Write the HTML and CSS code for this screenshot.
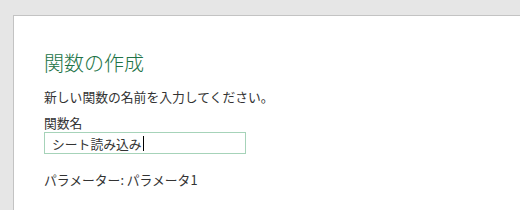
FILE: index.html
```html
<!DOCTYPE html>
<html lang="ja">
<head>
    <meta charset="UTF-8">
    <title>関数の作成</title>
    <link rel="stylesheet" href="styles.css">
</head>
<body>
<div class="dialog">
    <h1 class="title">関数の作成</h1>
    <p class="desc">新しい関数の名前を入力してください。</p>
    <label class="label" for="fn">関数名</label>
    <div class="input"><span id="fn">シート読み込み</span><span class="caret"></span></div>
    <p class="params">パラメーター: パラメータ1</p>
</div>
</body>
</html>
```
FILE: styles.css
```css
* {
    padding: 0;
    margin: 0;
    box-sizing: border-box;
}

body {
    background: #e6e6e6;
    width: 520px;
    height: 210px;
    overflow: hidden;
    padding: 15px 0 0 13px;
    font-family: "Noto Sans CJK JP", "Noto Sans", sans-serif;
    color: #333;
}

.dialog {
    background: #fff;
    border-top: 1px solid #c3c3c3;
    border-left: 1px solid #c3c3c3;
    height: 200px;
    padding: 33px 0 0 30px;
}

.title {
    font-size: 20px;
    font-weight: 300;
    color: #217346;
    line-height: 28px;
}

.desc {
    margin-top: 11px;
    font-size: 12.8px;
    line-height: 18px;
}

.label {
    display: block;
    margin-top: 8px;
    font-size: 12.8px;
    line-height: 18px;
}

.input {
    display: flex;
    align-items: center;
    width: 202px;
    height: 22px;
    border: 1px solid #a6d3b9;
    padding-left: 7px;
    font-size: 12.8px;
}

.caret {
    width: 1px;
    height: 15px;
    background: #000;
    margin-left: 1px;
}

.params {
    margin-top: 17px;
    font-size: 12.8px;
    line-height: 18px;
}
```
